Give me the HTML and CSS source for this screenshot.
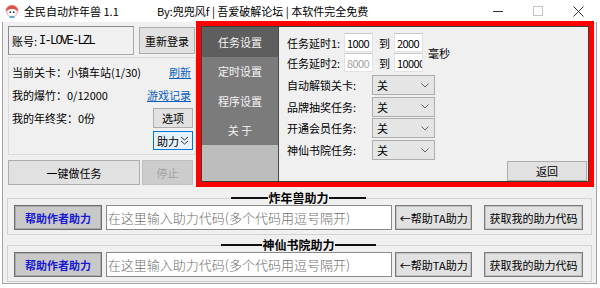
FILE: index.html
```html
<!DOCTYPE html>
<html lang="zh-CN">
<head>
    <meta charset="UTF-8">
    <meta name="viewport" content="width=device-width, initial-scale=1.0">
    <title>全民自动炸年兽 1.1</title>
    <link rel="stylesheet" href="styles.css">
</head>
<body>

<div class="window">
    <div class="titlebar">
        <svg class="app-icon" viewBox="0 0 14 14">
            <circle cx="7" cy="7" r="6.5" fill="#f6cfcb"/>
            <path d="M0.8 7.5 A6.2 6.2 0 0 1 13.2 7.5 Q10 4.2 7 5.2 Q4 4.2 0.8 7.5Z" fill="#e0504a"/>
            <ellipse cx="7" cy="8.4" rx="4.2" ry="3.4" fill="#fff"/>
            <circle cx="5.3" cy="8.2" r="0.9" fill="#333"/>
            <circle cx="8.7" cy="8.2" r="0.9" fill="#333"/>
            <path d="M4.5 13 h5" stroke="#3a9fd6" stroke-width="1.6"/>
        </svg>
        <span class="app-title">全民自动炸年兽 1.1</span>
        <span class="app-by">By:兜兜风f | 吾爱破解论坛 | 本软件完全免费</span>
        <div class="win-controls">
            <span class="win-btn">
                <svg width="10" height="10" viewBox="0 0 10 10"><path d="M0 5.5 H10" stroke="#333" stroke-width="1"/></svg>
            </span>
            <span class="win-btn">
                <svg width="10" height="10" viewBox="0 0 10 10"><rect x="0.5" y="0.5" width="9" height="9" fill="none" stroke="#c4c4c4" stroke-width="1"/></svg>
            </span>
            <span class="win-btn">
                <svg width="11" height="11" viewBox="0 0 11 11"><path d="M0.5 0.5 L10.5 10.5 M10.5 0.5 L0.5 10.5" stroke="#333" stroke-width="1"/></svg>
            </span>
        </div>
    </div>

    <div class="client">
        <div class="top">
            <div class="left">
                <div class="account-row">
                    <div class="account">账号:<span class="mono">I-LOVE-LZL</span></div>
                    <button class="btn relogin">重新登录</button>
                </div>

                <div class="info">
                    <div class="info-row">
                        <span>当前关卡：小镇车站(1/30)</span>
                        <a class="link">刷新</a>
                    </div>
                    <div class="info-row">
                        <span>我的爆竹：0/12000</span>
                        <a class="link">游戏记录</a>
                    </div>
                    <div class="info-row">
                        <span>我的年终奖：0份</span>
                        <button class="btn small">选项</button>
                    </div>
                    <div class="info-row end">
                        <button class="btn small helper">助力<svg width="9" height="9" viewBox="0 0 9 9"><path d="M1 1 L4.5 4 L8 1 M1 5 L4.5 8 L8 5" fill="none" stroke="#333" stroke-width="1"/></svg></button>
                    </div>
                </div>

                <div class="action-row">
                    <button class="btn go">一键做任务</button>
                    <button class="btn stop" disabled>停止</button>
                </div>
            </div>

            <div class="settings">
                <div class="settings-inner">
                    <div class="tabs">
                        <div class="tab active">任务设置</div>
                        <div class="tab">定时设置</div>
                        <div class="tab">程序设置</div>
                        <div class="tab">关 于</div>
                    </div>

                    <div class="pane">
                        <div class="delay-block">
                            <div class="delay-rows">
                                <div class="delay-row">
                                    <span class="label">任务延时1:</span>
                                    <input class="num" type="text" value="1000">
                                    <span class="to">到</span>
                                    <input class="num" type="text" value="2000">
                                </div>
                                <div class="delay-row">
                                    <span class="label">任务延时2:</span>
                                    <input class="num" type="text" value="8000" disabled>
                                    <span class="to">到</span>
                                    <input class="num" type="text" value="10000">
                                </div>
                            </div>
                            <span class="unit">毫秒</span>
                        </div>

                        <div class="opt-rows">
                            <div class="opt-row">
                                <span class="opt-label">自动解锁关卡:</span>
                                <div class="select"><span>关</span><svg width="8" height="5" viewBox="0 0 8 5"><path d="M0.5 0.5 L4 4 L7.5 0.5" fill="none" stroke="#666" stroke-width="1"/></svg></div>
                            </div>
                            <div class="opt-row">
                                <span class="opt-label">品牌抽奖任务:</span>
                                <div class="select"><span>关</span><svg width="8" height="5" viewBox="0 0 8 5"><path d="M0.5 0.5 L4 4 L7.5 0.5" fill="none" stroke="#666" stroke-width="1"/></svg></div>
                            </div>
                            <div class="opt-row">
                                <span class="opt-label">开通会员任务:</span>
                                <div class="select"><span>关</span><svg width="8" height="5" viewBox="0 0 8 5"><path d="M0.5 0.5 L4 4 L7.5 0.5" fill="none" stroke="#666" stroke-width="1"/></svg></div>
                            </div>
                            <div class="opt-row">
                                <span class="opt-label">神仙书院任务:</span>
                                <div class="select"><span>关</span><svg width="8" height="5" viewBox="0 0 8 5"><path d="M0.5 0.5 L4 4 L7.5 0.5" fill="none" stroke="#666" stroke-width="1"/></svg></div>
                            </div>
                        </div>

                        <button class="btn back">返回</button>
                    </div>
                </div>
            </div>
        </div>

        <fieldset class="assist">
            <legend class="assist-title"><span class="dash"></span>炸年兽助力<span class="dash"></span></legend>
            <div class="assist-row">
                <button class="btn author">帮助作者助力</button>
                <input class="code" type="text" placeholder="在这里输入助力代码(多个代码用逗号隔开)">
                <button class="btn heavy ta">←帮助TA助力</button>
                <button class="btn heavy get">获取我的助力代码</button>
            </div>
        </fieldset>

        <fieldset class="assist">
            <legend class="assist-title wide"><span class="dash"></span>神仙书院助力<span class="dash"></span></legend>
            <div class="assist-row">
                <button class="btn author">帮助作者助力</button>
                <input class="code" type="text" placeholder="在这里输入助力代码(多个代码用逗号隔开)">
                <button class="btn heavy ta">←帮助TA助力</button>
                <button class="btn heavy get">获取我的助力代码</button>
            </div>
        </fieldset>
    </div>
</div>

</body>
</html>
```

FILE: styles.css
```css
* {
    box-sizing: border-box;
}

body {
    margin: 0;
    background: #fff;
    font-family: "Noto Sans CJK SC", "Microsoft YaHei", sans-serif;
    font-size: 11px;
    color: #000;
}

.window {
    width: 600px;
}

/* title bar */
.titlebar {
    height: 22px;
    display: flex;
    align-items: center;
    background: #fff;
}

.app-icon {
    width: 14px;
    height: 14px;
    margin: 0 5px;
}

.app-title {
    width: 133px;
    font-size: 11px;
    line-height: 14px;
}

.app-by {
    flex: 1;
    line-height: 14px;
}

.win-controls {
    display: flex;
    height: 22px;
    margin-right: 2px;
}

.win-btn {
    width: 40px;
    display: flex;
    align-items: center;
    justify-content: center;
}

/* window body */
.client {
    margin: 0 3px 0 2px;
    background: #f0f0f0;
    border: 1px solid #a3a3a3;
    border-top: 0;
    padding-bottom: 1px;
}

.top {
    display: flex;
    align-items: flex-start;
}

.left {
    width: 193px;
    padding: 4px 0 0 5px;
}

.btn {
    background: #e1e1e1;
    border: 1px solid #adadad;
    font-family: inherit;
    font-size: 11px;
    color: #000;
    padding: 0;
    display: flex;
    align-items: center;
    justify-content: center;
    line-height: 14px;
}

.account-row {
    display: flex;
    align-items: center;
    gap: 5px;
}

.account {
    width: 126px;
    height: 29px;
    border: 1px solid #a9a9a9;
    border-top-color: #8a8a8a;
    border-left-color: #8a8a8a;
    padding-left: 3px;
    display: flex;
    align-items: center;
    font-size: 11px;
}

.mono {
    font-family: "Liberation Mono", monospace;
    font-size: 12px;
    letter-spacing: -1.7px;
    margin-left: 2px;
}

.relogin {
    width: 56px;
    height: 27px;
}

.info {
    margin-top: 2px;
    border: 1px solid #dadada;
    padding: 4px 2px 4px 3px;
    display: flex;
    flex-direction: column;
    gap: 3px;
}

.info-row {
    height: 20px;
    display: flex;
    align-items: center;
    justify-content: space-between;
}

.info-row.end {
    height: 19px;
    justify-content: flex-end;
}

.link {
    color: #0b5fc0;
    text-decoration: underline;
    margin-right: 2px;
}

.small {
    width: 40px;
    height: 20px;
}

.helper {
    height: 19px;
    background: #e5f1fb;
    border-color: #0078d7;
    gap: 1px;
}

.action-row {
    margin-top: 5px;
    display: flex;
    gap: 2px;
}

.go {
    width: 132px;
    height: 25px;
}

.stop {
    width: 51px;
    height: 25px;
    background: #cccccc;
    border-color: #bfbfbf;
    color: #a3a3a3;
}

/* settings panel */
.settings {
    width: 398px;
    height: 166px;
    margin-top: -1px;
    border: 5px solid #ff0000;
}

.settings-inner {
    display: flex;
    height: 100%;
    border: 1px solid #3d3d3d;
}

.tabs {
    width: 77px;
    background: #bdbdbd;
    border-right: 1px solid #4a4a4a;
    display: flex;
    flex-direction: column;
}

.tab {
    height: 29.5px;
    display: flex;
    align-items: center;
    justify-content: center;
    background: #7b7b7b;
    color: #f4f4f4;
}

.tab.active {
    background: #5e5e5e;
}

.pane {
    flex: 1;
    display: flex;
    flex-direction: column;
    padding: 6px 1px 0 8px;
}

.delay-block {
    display: flex;
    align-items: center;
}

.delay-rows {
    display: flex;
    flex-direction: column;
    gap: 1px;
}

.delay-row {
    height: 19px;
    display: flex;
    align-items: center;
}

.label {
    width: 57px;
}

.num {
    width: 29px;
    height: 19px;
    border: 1px solid #e2e2e2;
    border-top-color: #c8c8c8;
    background: #fff;
    font-family: inherit;
    font-size: 11px;
    letter-spacing: -0.6px;
    padding: 0 0 0 2px;
    color: #000;
}

.num:disabled {
    color: #a3a3a3;
}

.to {
    margin: 0 4px 0 6px;
}

.unit {
    margin-left: 5px;
}

.opt-rows {
    margin-top: 3px;
    display: flex;
    flex-direction: column;
    gap: 1.7px;
}

.opt-row {
    height: 20px;
    display: flex;
    align-items: center;
}

.opt-label {
    width: 85px;
}

.select {
    width: 63px;
    height: 20px;
    background: #e5e5e5;
    border: 1px solid #adadad;
    padding: 0 5px 0 4px;
    display: flex;
    align-items: center;
    justify-content: space-between;
}

.back {
    margin-top: auto;
    align-self: flex-end;
    width: 80px;
    height: 20px;
}

/* assist groups */
.assist {
    margin: 4px 4px 0;
    padding: 0 8px 4px 6px;
    border: 1px solid #d3d3d3;
    min-width: 0;
}

.assist + .assist {
    margin-top: 3px;
}

.assist-title {
    margin: 0 auto;
    padding: 0;
    display: flex;
    align-items: center;
    font-weight: bold;
    font-size: 12px;
    line-height: 14px;
    color: #000;
}

.dash {
    width: 37px;
    height: 1.5px;
    background: #111;
}

.assist-title.wide .dash {
    width: 41px;
}

.assist-row {
    height: 25px;
    display: flex;
    align-items: center;
}

.author {
    width: 88px;
    height: 25px;
    background: #c9c9c9;
    border: 1px solid #6f6f6f;
    box-shadow: inset 0 0 0 1px #a9a9a9;
    color: #1a1ad2;
    font-weight: bold;
}

.code {
    width: 287px;
    height: 25px;
    margin-left: 4px;
    border: 1px solid #8a8a8a;
    background: #fff;
    font-family: inherit;
    font-size: 13px;
    font-weight: 300;
    padding: 0 0 0 1px;
}

.code::placeholder {
    color: #707070;
}

.heavy {
    height: 25px;
    border: 1px solid #7a7a7a;
    box-shadow: inset 0 0 0 1px #c2c2c2;
}

.ta {
    width: 77px;
    margin-left: 3px;
}

.get {
    width: 99px;
    margin-left: 12px;
}
```
